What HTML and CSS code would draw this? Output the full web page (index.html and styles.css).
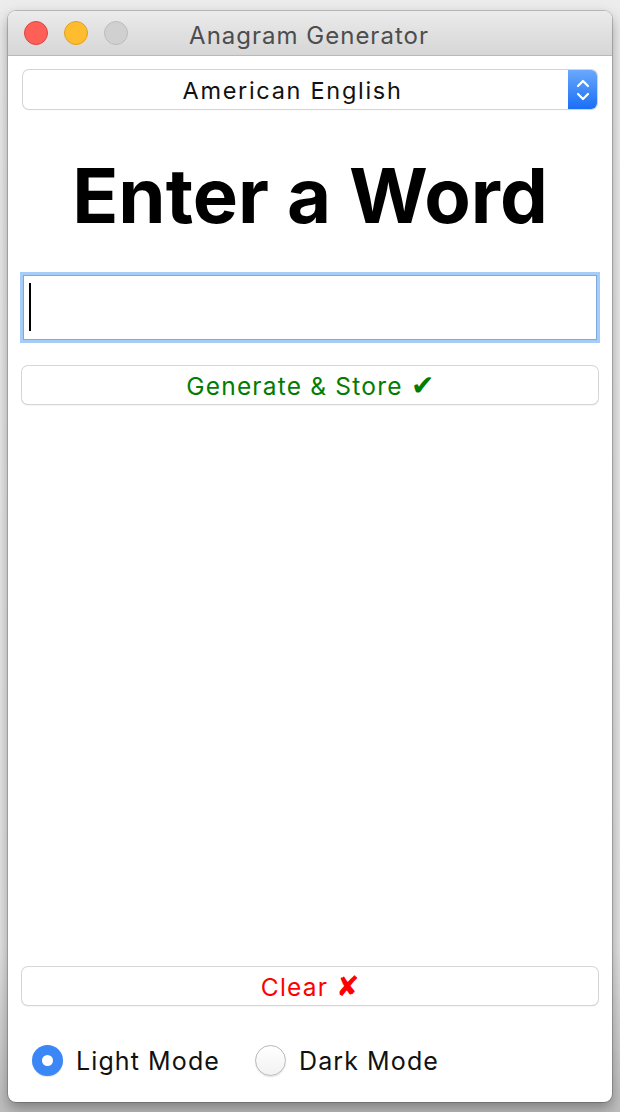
FILE: index.html
```html
<!DOCTYPE html>
<html>
<head>
<meta charset="utf-8">
<link rel="stylesheet" href="styles.css">
</head>
<body>
<div class="window">
  <div class="titlebar">
    <div class="lights">
      <span class="light red"></span>
      <span class="light yellow"></span>
      <span class="light gray"></span>
    </div>
    <div class="title">Anagram Generator</div>
  </div>
  <div class="content">
    <div class="popup">
      <div class="popup-label">American English</div>
      <div class="stepper">
        <svg width="16" height="26" viewBox="0 0 16 26"><path d="M3 9 L8 4 L13 9 M3 17 L8 22 L13 17" fill="none" stroke="#fff" stroke-width="2.2" stroke-linecap="round" stroke-linejoin="round"/></svg>
      </div>
    </div>
    <h1 class="heading">Enter a Word</h1>
    <div class="field"><span class="caret"></span></div>
    <div class="btn btn-generate">Generate &amp; Store <span class="mark">✔</span></div>
    <div class="spacer"></div>
    <div class="btn btn-clear">Clear <span class="mark">✘</span></div>
    <div class="radios">
      <div class="radio-item"><span class="radio on"><span class="dot"></span></span><span class="radio-label">Light Mode</span></div>
      <div class="radio-item"><span class="radio"></span><span class="radio-label">Dark Mode</span></div>
    </div>
  </div>
</div>
</body>
</html>
```
FILE: styles.css
```css
html, body {
  margin: 0;
  padding: 0;
}
body {
  width: 620px;
  height: 1112px;
  overflow: hidden;
  background: linear-gradient(#ececec, #e4e4e4 85%, #bdbdbd);
  font-family: Inter, "Noto Sans", sans-serif;
}
.window {
  margin: 11px 0 0 8px;
  width: 604px;
  height: 1091px;
  background: #fff;
  border-radius: 8px;
  box-shadow: 0 0 0 1px rgba(0,0,0,0.18), 0 6px 14px rgba(0,0,0,0.35);
  display: flex;
  flex-direction: column;
  overflow: hidden;
}
.titlebar {
  height: 44px;
  flex: none;
  background: linear-gradient(#ebebeb, #d6d6d6);
  border-bottom: 1px solid #b9b9b9;
  display: flex;
  align-items: center;
  position: relative;
}
.lights {
  display: flex;
  gap: 16px;
  padding-left: 16px;
}
.light {
  width: 22px;
  height: 22px;
  border-radius: 50%;
  display: block;
}
.red { background: #fe5f57; border: 1px solid #e0443e; }
.yellow { background: #febc2e; border: 1px solid #dea123; }
.gray { background: #d0d0d0; border: 1px solid #bcbcbc; }
.title {
  position: absolute;
  left: 0;
  right: 0;
  text-align: center;
  font-size: 24px;
  letter-spacing: 1px;
  color: #4d4d4d;
  pointer-events: none;
  padding-right: 2px;
  top: 10px;
}
.content {
  flex: 1;
  display: flex;
  flex-direction: column;
  padding: 14px 15px 26px;
}
.popup {
  height: 39px;
  display: flex;
  border-radius: 6px;
  background: #fff;
  box-shadow: 0 0 0 1px #d4d4d4, 0 1px 1px rgba(0,0,0,0.15);
}
.popup-label {
  flex: 1;
  text-align: center;
  font-size: 23.5px;
  letter-spacing: 1.7px;
  line-height: 41px;
  color: #111;
  padding-right: 6px;
}
.stepper {
  width: 29px;
  background: linear-gradient(#6aa9fc, #1a6ff5);
  border-radius: 0 6px 6px 0;
  display: flex;
  align-items: center;
  justify-content: center;
}
.heading {
  margin: 48px 0 0;
  font-size: 76px;
  line-height: 76px;
  font-weight: 700;
  text-align: center;
  color: #000;
  letter-spacing: 0;
}
.field {
  box-sizing: border-box;
  margin-top: 42px;
  height: 65px;
  border: 1px solid #7da9df;
  box-shadow: 0 0 0 3px #a5cdf8;
  padding: 7px 5px;
}
.caret {
  display: block;
  width: 2px;
  height: 48px;
  background: #000;
}
.btn {
  margin: 0 -1px;
  height: 38px;
  border-radius: 6px;
  background: #fff;
  box-shadow: 0 0 0 1px #d6d6d6, 0 1px 1.5px rgba(0,0,0,0.22);
  text-align: center;
  font-size: 24.5px;
  letter-spacing: 1.2px;
  line-height: 40px;
}
.mark {
  font-size: 28px;
  line-height: 20px;
  letter-spacing: 0;
}
.btn-generate {
  margin-top: 26px;
  color: #007d00;
}
.btn-clear {
  color: #fe0000;
}
.spacer {
  flex: 1;
}
.radios {
  margin-top: 40px;
  display: flex;
  align-items: center;
  gap: 35px;
  padding-left: 9px;
}
.radio-item {
  display: flex;
  align-items: center;
  gap: 13px;
}
.radio {
  width: 31px;
  height: 31px;
  border-radius: 50%;
  box-sizing: border-box;
  border: 1px solid #b9b9b9;
  background: linear-gradient(#ffffff, #f2f2f2);
  display: flex;
  align-items: center;
  justify-content: center;
  box-shadow: 0 1px 1px rgba(0,0,0,0.12);
}
.radio.on {
  border: none;
  background: #3a87f5;
}
.dot {
  width: 11px;
  height: 11px;
  border-radius: 50%;
  background: #fff;
}
.radio-label {
  font-size: 25px;
  letter-spacing: 1.1px;
  color: #111;
}
```
